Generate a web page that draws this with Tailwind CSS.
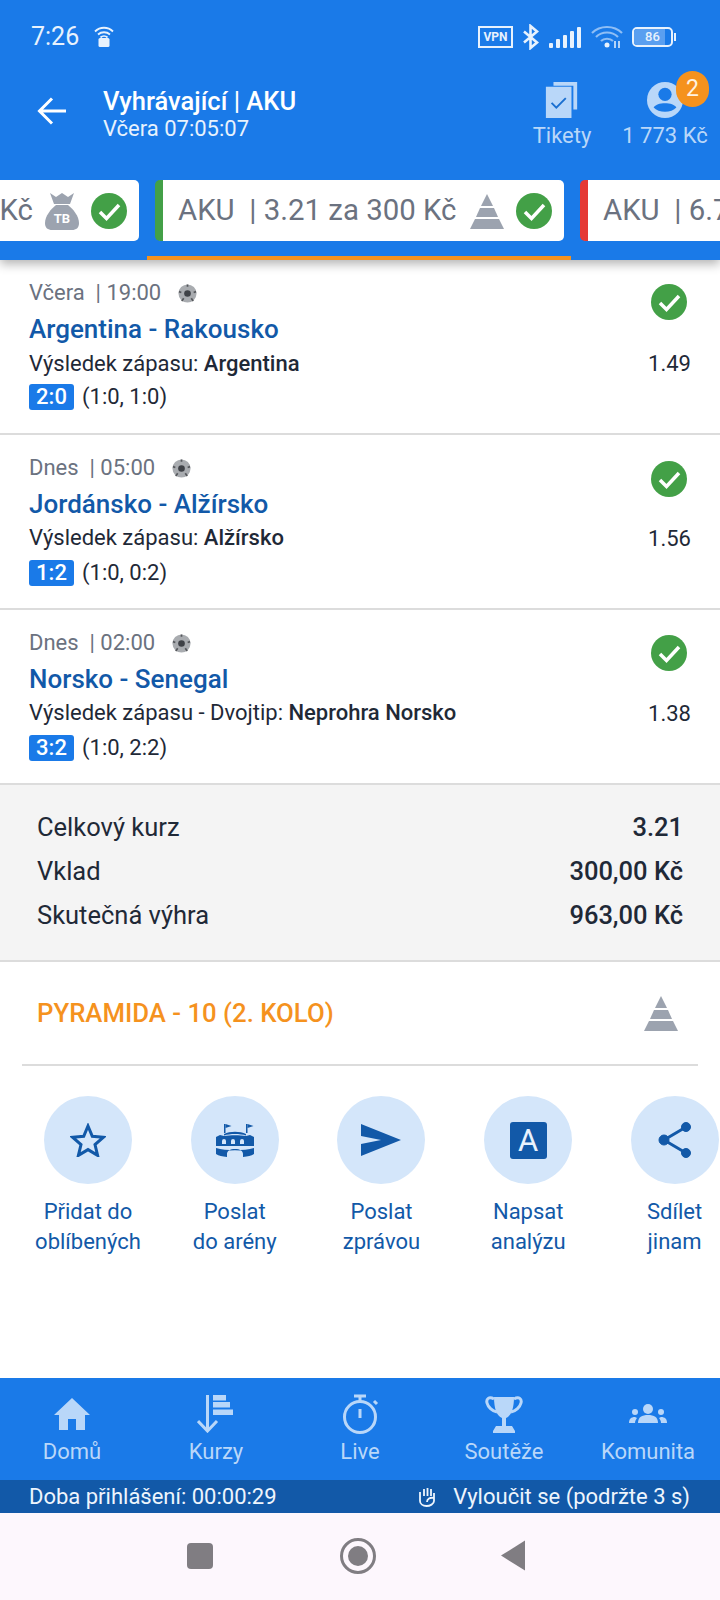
<!DOCTYPE html>
<html lang="cs">
<head>
  <meta charset="utf-8">
  <script src="https://cdn.jsdelivr.net/npm/@tailwindcss/browser@4"></script>
</head>
<body>
<div class="w-[720px] h-[1600px] flex flex-col bg-white overflow-hidden font-['Roboto',sans-serif] text-[#1f2937]">

  <!-- header -->
  <header class="h-[260px] shrink-0 bg-[#1a7ae8] flex flex-col relative z-10 shadow-[0_4px_10px_rgba(0,0,0,0.3)]">
    <!-- status bar -->
    <div class="h-[72px] pt-[22px] pl-[31px] pr-[44px] flex items-start justify-between text-white">
      <div class="flex items-center gap-[15px]">
        <span class="text-[25px] leading-[30px] text-[#e8f2fd]">7:26</span>
        <svg width="20" height="24" viewBox="0 0 20 24" fill="none" stroke="#e8f2fd" stroke-width="1.8"><path d="M1 6.500C6 1.500 14 1.500 19 6.500M4 9.500C7.500 6.500 12.500 6.500 16 9.500"/><path d="M6.500 12.500a5 5 0 0 1 7 0"/><rect x="4.500" y="13" width="11" height="9" rx="1.500" fill="#e8f2fd" stroke="none"/></svg>
      </div>
      <div class="flex items-center gap-[9px] h-[30px]">
        <div class="w-[35px] h-[22px] border-2 border-[#e8f2fd] flex items-center justify-center text-[12px] font-bold text-[#e8f2fd]">VPN</div>
        <svg width="18" height="26" viewBox="0 0 18 26" fill="none" stroke="#e8f2fd" stroke-width="2.600"><path d="M2 7.500L15 18.500L8.500 24V2L15 7.500L2 18.500"/></svg>
        <svg width="33" height="22" viewBox="0 0 33 22" fill="#e8f2fd"><rect x="0" y="17" width="4" height="5" rx="1"/><rect x="7" y="13" width="4" height="9" rx="1"/><rect x="14" y="9" width="4" height="13" rx="1"/><rect x="21" y="5" width="4" height="17" rx="1"/><rect x="28" y="1" width="4" height="21" rx="1"/></svg>
        <svg width="32" height="24" viewBox="0 0 32 24" fill="none" stroke="#8fbef5" stroke-width="2.200"><path d="M1 8C9 0 23 0 31 8M5 12C11 6 21 6 27 12M10 16C13 13 19 13 22 16"/><circle cx="16" cy="20" r="2.500" fill="#e8f2fd" stroke="none"/><path d="M24 16v7M28 16v7" stroke="#e8f2fd" stroke-width="1.500"/></svg>
        <div class="flex items-center">
          <div class="w-[41px] h-[20px] border-2 border-[#e8f2fd] rounded-[5px] relative overflow-hidden flex items-center justify-center">
            <div class="absolute left-0 top-0 bottom-0 w-[31px] bg-[#5a9ff0]"></div>
            <span class="relative text-[13px] font-medium text-[#e8f2fd]">86</span>
          </div>
          <div class="w-[2px] h-[8px] ml-[1px] bg-[#e8f2fd]"></div>
        </div>
      </div>
    </div>
    <!-- title row -->
    <div class="h-[108px] flex pr-[10px]">
      <div class="w-[103px] pl-[37px] pt-[24px]">
        <svg width="30" height="30" viewBox="0 0 30 30" fill="none" stroke="#fff" stroke-width="3"><path d="M29 15H3M15 2.500L2.500 15L15 27.500"/></svg>
      </div>
      <div class="flex-1 pt-[14px]">
        <div class="text-[25.500px] leading-[30px] font-medium text-white">Vyhrávající | AKU</div>
        <div class="text-[22px] leading-[26px] text-[#e8f2fd]">Včera 07:05:07</div>
      </div>
      <div class="w-[116px] flex flex-col items-center pt-[10px] text-[#b9d7f9]">
        <svg width="34" height="36" viewBox="0 0 34 38" fill="none"><path d="M8 0H33V29H29V4H8Z" fill="#b9d7f9"/><rect x="0" y="5" width="27" height="33" fill="#b9d7f9"/><path d="M6 22l5 5 10-10" stroke="#1a6fd0" stroke-width="2"/></svg>
        <span class="text-[22px] leading-[26px] mt-[5px]">Tikety</span>
      </div>
      <div class="w-[90px] flex flex-col items-center pt-[10px] text-[#b9d7f9] relative">
        <svg width="36" height="36" viewBox="0 0 38 38"><circle cx="19" cy="19" r="19" fill="#b9d7f9"/><circle cx="19" cy="13" r="7" fill="#1a7ae8"/><path d="M7 27c3-6 21-6 24 0c-5 6-19 6-24 0z" fill="#1a7ae8"/></svg>
        <span class="text-[22px] leading-[26px] mt-[5px] whitespace-nowrap">1 773 Kč</span>
        <div class="absolute left-[56px] top-[-1px] w-[33px] h-[36px] rounded-full bg-[#f5921e] flex items-center justify-center text-[23px] text-[#fff3e2]">2</div>
      </div>
    </div>
    <!-- tabs -->
    <div class="h-[61px] flex gap-[16px] overflow-hidden">
      <div class="w-[200px] ml-[-61px] shrink-0 bg-white rounded-[5px] flex items-center justify-end gap-[12px] pr-[12px] text-[29.400px] text-[#6b7280]">
        <span>Kč</span>
        <svg width="34" height="38" viewBox="0 0 34 38"><path d="M5 1l6 4 6-4 6 4 6-4-4 11H9z" fill="#9ca3af"/><path d="M11 13h12c5 4 11 11 11 18c0 5-3 7-7 7H7c-4 0-7-2-7-7c0-7 6-14 11-18z" fill="#9ca3af"/><text x="17" y="31" text-anchor="middle" font-family="Roboto" font-weight="700" font-size="13" fill="#fff">TB</text></svg>
        <svg width="36" height="36" viewBox="0 0 36 36"><circle cx="18" cy="18" r="18" fill="#43a047"/><path d="M9 19l6.500 6.500L28 12" fill="none" stroke="#fff" stroke-width="3.500"/></svg>
      </div>
      <div class="w-[409px] shrink-0 bg-white rounded-[5px] overflow-hidden flex items-center border-l-[8px] border-[#43a047] text-[29.400px] text-[#6b7280] pl-[15px] pr-[12px] gap-[11px]">
        <span class="flex-1 whitespace-nowrap">AKU &nbsp;| 3.21 za 300 Kč</span>
        <svg width="36" height="36" viewBox="0 0 36 36" fill="#9ca3af"><path d="M18 1l6 12H12z"/><path d="M11 15h14l4 9H7z"/><path d="M6 26h24l5 10H1z"/></svg>
        <svg width="36" height="36" viewBox="0 0 36 36"><circle cx="18" cy="18" r="18" fill="#43a047"/><path d="M9 19l6.500 6.500L28 12" fill="none" stroke="#fff" stroke-width="3.500"/></svg>
      </div>
      <div class="w-[300px] shrink-0 bg-white rounded-[5px] overflow-hidden flex items-center border-l-[8px] border-[#e53935] text-[29.400px] text-[#6b7280] pl-[15px] whitespace-nowrap">AKU &nbsp;| 6.7</div>
    </div>
    <div class="absolute left-[147px] top-[256px] w-[424px] h-[4px] bg-[#f5921e]"></div>
  </header>

  <!-- matches -->
  <section class="h-[175px] shrink-0 border-b-2 border-[#dcdcdc] pl-[29px] pr-[29px] flex justify-between">
    <div class="pt-[19px]">
      <div class="flex items-center text-[22px] leading-[28px] text-[#6b7280]">Včera &nbsp;| 19:00<svg class="ml-[17px]" width="19" height="19" viewBox="0 0 20 20"><circle cx="10" cy="10" r="9.500" fill="#a9acb0"/><circle cx="10" cy="10" r="3.500" fill="#3f4247"/><path d="M10 .5v2.500M1 8l2.500 1M19 8l-2.500 1M4 18l2-3M16 18l-2-3" stroke="#55585c" stroke-width="1.800"/></svg></div>
      <div class="text-[26px] leading-[30px] font-medium text-[#1259a8] mt-[7px]">Argentina - Rakousko</div>
      <div class="text-[22px] leading-[26px] mt-[7px]">Výsledek zápasu: <span class="font-medium">Argentina</span></div>
      <div class="flex items-center text-[22px] leading-[26px] mt-[7px]"><span class="w-[45px] h-[26px] rounded-[3px] bg-[#1a7ae8] text-white font-medium text-center mr-[8px]">2:0</span>(1:0, 1:0)</div>
    </div>
    <div class="flex flex-col items-end">
      <svg class="mt-[24px] mr-[4px]" width="36" height="36" viewBox="0 0 36 36"><circle cx="18" cy="18" r="18" fill="#43a047"/><path d="M9 19l6.500 6.500L28 12" fill="none" stroke="#fff" stroke-width="3.500"/></svg>
      <div class="text-[22px] leading-[26px] mt-[31px]">1.49</div>
    </div>
  </section>
  <section class="h-[175px] shrink-0 border-b-2 border-[#dcdcdc] pl-[29px] pr-[29px] flex justify-between">
    <div class="pt-[19px]">
      <div class="flex items-center text-[22px] leading-[28px] text-[#6b7280]">Dnes &nbsp;| 05:00<svg class="ml-[17px]" width="19" height="19" viewBox="0 0 20 20"><circle cx="10" cy="10" r="9.500" fill="#a9acb0"/><circle cx="10" cy="10" r="3.500" fill="#3f4247"/><path d="M10 .5v2.500M1 8l2.500 1M19 8l-2.500 1M4 18l2-3M16 18l-2-3" stroke="#55585c" stroke-width="1.800"/></svg></div>
      <div class="text-[26px] leading-[30px] font-medium text-[#1259a8] mt-[7px]">Jordánsko - Alžírsko</div>
      <div class="text-[22px] leading-[26px] mt-[6px]">Výsledek zápasu: <span class="font-medium">Alžírsko</span></div>
      <div class="flex items-center text-[22px] leading-[26px] mt-[9px]"><span class="w-[45px] h-[26px] rounded-[3px] bg-[#1a7ae8] text-white font-medium text-center mr-[8px]">1:2</span>(1:0, 0:2)</div>
    </div>
    <div class="flex flex-col items-end">
      <svg class="mt-[26px] mr-[4px]" width="36" height="36" viewBox="0 0 36 36"><circle cx="18" cy="18" r="18" fill="#43a047"/><path d="M9 19l6.500 6.500L28 12" fill="none" stroke="#fff" stroke-width="3.500"/></svg>
      <div class="text-[22px] leading-[26px] mt-[29px]">1.56</div>
    </div>
  </section>
  <section class="h-[175px] shrink-0 border-b-2 border-[#dcdcdc] pl-[29px] pr-[29px] flex justify-between">
    <div class="pt-[19px]">
      <div class="flex items-center text-[22px] leading-[28px] text-[#6b7280]">Dnes &nbsp;| 02:00<svg class="ml-[17px]" width="19" height="19" viewBox="0 0 20 20"><circle cx="10" cy="10" r="9.500" fill="#a9acb0"/><circle cx="10" cy="10" r="3.500" fill="#3f4247"/><path d="M10 .5v2.500M1 8l2.500 1M19 8l-2.500 1M4 18l2-3M16 18l-2-3" stroke="#55585c" stroke-width="1.800"/></svg></div>
      <div class="text-[26px] leading-[30px] font-medium text-[#1259a8] mt-[7px]">Norsko - Senegal</div>
      <div class="text-[22px] leading-[26px] mt-[6px]">Výsledek zápasu - Dvojtip: <span class="font-medium">Neprohra Norsko</span></div>
      <div class="flex items-center text-[22px] leading-[26px] mt-[9px]"><span class="w-[45px] h-[26px] rounded-[3px] bg-[#1a7ae8] text-white font-medium text-center mr-[8px]">3:2</span>(1:0, 2:2)</div>
    </div>
    <div class="flex flex-col items-end">
      <svg class="mt-[25px] mr-[4px]" width="36" height="36" viewBox="0 0 36 36"><circle cx="18" cy="18" r="18" fill="#43a047"/><path d="M9 19l6.500 6.500L28 12" fill="none" stroke="#fff" stroke-width="3.500"/></svg>
      <div class="text-[22px] leading-[26px] mt-[30px]">1.38</div>
    </div>
  </section>

  <!-- summary -->
  <section class="h-[177px] shrink-0 bg-[#f4f4f4] border-b-2 border-[#dcdcdc] pt-[27px] pl-[37px] pr-[37px] flex flex-col gap-[14px] text-[25.500px] leading-[30px]">
    <div class="flex justify-between"><span>Celkový kurz</span><span class="font-medium">3.21</span></div>
    <div class="flex justify-between"><span>Vklad</span><span class="font-medium">300,00 Kč</span></div>
    <div class="flex justify-between"><span>Skutečná výhra</span><span class="font-medium">963,00 Kč</span></div>
  </section>

  <!-- pyramid -->
  <section class="h-[104px] shrink-0 mx-[22px] border-b-2 border-[#dcdcdc] flex items-center justify-between pl-[15px] pr-[19px]">
    <span class="text-[25.750px] font-medium text-[#f5921e]">PYRAMIDA - 10 (2. KOLO)</span>
    <svg width="36" height="36" viewBox="0 0 36 36" fill="#9ca3af"><path d="M18 1l6 12H12z"/><path d="M11 15h14l4 9H7z"/><path d="M6 26h24l5 10H1z"/></svg>
  </section>

  <!-- actions -->
  <section class="h-[312px] shrink-0 pt-[30px] flex pl-[14.600px] text-[#1259a8] text-[22px] leading-[30px] text-center overflow-hidden">
    <div class="w-[146.750px] shrink-0 flex flex-col items-center">
      <div class="w-[88px] h-[88px] rounded-full bg-[#d4e6fa] flex items-center justify-center">
        <svg width="36" height="34" viewBox="0 0 36 34" fill="none" stroke="#1259a8" stroke-width="3"><path d="M18 3l4.300 10.300 11.200.900-8.500 7.300 2.600 10.900-9.600-5.800-9.600 5.800 2.600-10.900L2.500 14.200l11.200-.900z"/></svg>
      </div>
      <div class="mt-[13px] whitespace-nowrap">Přidat do<br>oblíbených</div>
    </div>
    <div class="w-[146.750px] shrink-0 flex flex-col items-center">
      <div class="w-[88px] h-[88px] rounded-full bg-[#d4e6fa] flex items-center justify-center">
        <svg width="38" height="34" viewBox="0 0 38 34" fill="#1259a8"><path d="M8 1h1.500v9H8zM30 1h1.500v9H30z"/><path d="M9.500 1l6 2-6 2zM31.500 1l6 2-6 2z"/><path d="M8 11c6-3 16-3 22 0v1.500c-6-2-16-2-22 0z"/><path d="M0 14l4-2 4 1c6-1 16-1 22 0l4-1 4 2v9H0zM0 25c10 3 28 3 38 0v6c-3 2-6 2.500-11 3v-3c0-3-3-5-8-5s-8 2-8 5v3c-5-.5-8-1-11-3z"/><path d="M6 21v-3a2 2 0 0 1 4 0v3zM15 21v-3a2 2 0 0 1 4 0v3zM24 21v-3a2 2 0 0 1 4 0v3z" fill="#d4e6fa"/></svg>
      </div>
      <div class="mt-[13px] whitespace-nowrap">Poslat<br>do arény</div>
    </div>
    <div class="w-[146.750px] shrink-0 flex flex-col items-center">
      <div class="w-[88px] h-[88px] rounded-full bg-[#d4e6fa] flex items-center justify-center">
        <svg width="40" height="32" viewBox="0 0 40 32" fill="#1259a8"><path d="M0 0l40 16L0 32V20l20-4L0 12z"/></svg>
      </div>
      <div class="mt-[13px] whitespace-nowrap">Poslat<br>zprávou</div>
    </div>
    <div class="w-[146.750px] shrink-0 flex flex-col items-center">
      <div class="w-[88px] h-[88px] rounded-full bg-[#d4e6fa] flex items-center justify-center">
        <div class="w-[37px] h-[37px] rounded-[3px] bg-[#1259a8] flex items-center justify-center text-[31px] leading-none text-[#e8f2fd]">A</div>
      </div>
      <div class="mt-[13px] whitespace-nowrap">Napsat<br>analýzu</div>
    </div>
    <div class="w-[88px] shrink-0 ml-[29px] flex flex-col items-center">
      <div class="w-[88px] h-[88px] rounded-full bg-[#d4e6fa] flex items-center justify-center">
        <svg width="34" height="36" viewBox="0 0 34 36" fill="#1259a8" stroke="#1259a8"><path d="M6 18L28 5M6 18l22 13" stroke-width="3"/><circle cx="6" cy="18" r="5"/><circle cx="28" cy="5" r="4.500"/><circle cx="28" cy="31" r="4.500"/></svg>
      </div>
      <div class="mt-[13px] whitespace-nowrap">Sdílet<br>jinam</div>
    </div>
  </section>

  <!-- bottom nav -->
  <nav class="h-[102px] shrink-0 bg-[#1a7ae8] flex text-[#b9d7f9] text-[22px] leading-[26px]">
    <div class="w-[144px] flex flex-col items-center">
      <div class="h-[61px] pt-[12px] pb-[1px] flex items-center">
        <svg width="36" height="32" viewBox="0 0 36 32" fill="#b9d7f9"><path d="M18 0L36 17H31V32H22V21H14V32H5V17H0z"/></svg>
      </div>
      <span>Domů</span>
    </div>
    <div class="w-[144px] flex flex-col items-center">
      <div class="h-[61px] pt-[12px] pb-[1px] flex items-center">
        <svg width="38" height="38" viewBox="0 0 38 38" fill="#b9d7f9"><rect x="16" y="0" width="13" height="5.500"/><rect x="16" y="7" width="17" height="5.500"/><rect x="16" y="14.500" width="20" height="5.500"/><rect x="9" y="0" width="3" height="35"/><path d="M1 26l9.500 10L20 26" fill="none" stroke="#b9d7f9" stroke-width="3"/></svg>
      </div>
      <span>Kurzy</span>
    </div>
    <div class="w-[144px] flex flex-col items-center">
      <div class="h-[61px] pt-[12px] pb-[1px] flex items-center">
        <svg width="38" height="40" viewBox="0 0 38 40" fill="none" stroke="#b9d7f9" stroke-width="3"><circle cx="19" cy="23" r="15.500"/><path d="M13 2h12M19 2v5M33 7l3 3M19 15v9"/></svg>
      </div>
      <span>Live</span>
    </div>
    <div class="w-[144px] flex flex-col items-center">
      <div class="h-[61px] pt-[12px] pb-[1px] flex items-center">
        <svg width="38" height="38" viewBox="0 0 38 38" fill="#b9d7f9"><path d="M9 2h20c0 12-3 19-8 21v8h6l3 5v2H8v-2l3-5h6v-8C12 21 9 14 9 2z"/><path d="M9 4C4 1 1 4 2 8s5 8 10 9M29 4c5-3 8 0 7 4s-5 8-10 9" fill="none" stroke="#b9d7f9" stroke-width="3"/></svg>
      </div>
      <span>Soutěže</span>
    </div>
    <div class="w-[144px] flex flex-col items-center">
      <div class="h-[61px] pt-[12px] pb-[1px] flex items-center">
        <svg width="38" height="20" viewBox="0 0 38 20" fill="#b9d7f9"><circle cx="19" cy="5" r="5"/><circle cx="6" cy="8" r="3"/><circle cx="32" cy="8" r="3"/><path d="M9 19c0-6 4-8 10-8s10 2 10 8z"/><path d="M0 19c0-4 2-6 6-6l2 1c-1 1-2 3-2 5zM38 19c0-4-2-6-6-6l-2 1c1 1 2 3 2 5z"/></svg>
      </div>
      <span>Komunita</span>
    </div>
  </nav>

  <!-- session bar -->
  <div class="h-[33px] shrink-0 bg-[#1259a8] flex items-center justify-between pl-[29px] pr-[30px] text-[22px] text-[#eef5fd]">
    <span>Doba přihlášení: 00:00:29</span>
    <div class="flex items-center gap-[17px]">
      <svg width="18" height="20" viewBox="0 0 18 20" fill="none" stroke="#eef5fd" stroke-width="1.800"><path d="M2 9v5c0 3 3 5 6.500 5s7.500-2 7.500-5V6M6 9V2M9.500 9V1M13 9V2M2 9V5M16 11c-4-1-7 1-7 4"/></svg>
      <span>Vyloučit se (podržte 3 s)</span>
    </div>
  </div>

  <!-- android nav -->
  <div class="flex-1 bg-[#fdf7fd] flex items-start pt-[30px] pl-[187px]">
    <div class="w-[26px] h-[26px] rounded-[4px] bg-[#807d82]"></div>
    <div class="ml-[127px] w-[36px] h-[36px] -mt-[5px] rounded-full border-[3px] border-[#807d82] flex items-center justify-center"><div class="w-[20px] h-[20px] rounded-full bg-[#807d82]"></div></div>
    <svg class="ml-[124px] -mt-[3px]" width="26" height="31" viewBox="0 0 26 31" fill="#807d82"><path d="M25 0.500V30.500L1 15.500z"/></svg>
  </div>
</div>
</body>
</html>
